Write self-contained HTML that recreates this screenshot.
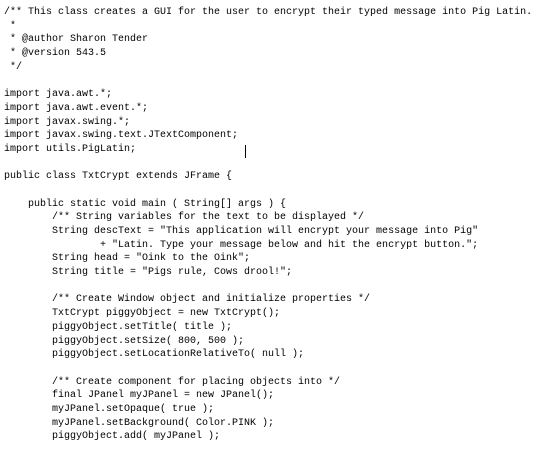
<!DOCTYPE html>
<html><head><meta charset="utf-8"><style>
html,body{margin:0;padding:0;background:#fff;width:540px;height:455px;overflow:hidden}
pre{margin:0;position:absolute;left:4px;top:6px;font-family:"Liberation Mono",monospace;font-size:10px;line-height:13.68px;color:#000;letter-spacing:0}
.cur{position:absolute;left:245px;top:145px;width:1px;height:13px;background:#000}
</style></head><body>
<pre>/** This class creates a GUI for the user to encrypt their typed message into Pig Latin.
 *
 * @author Sharon Tender
 * @version 543.5
 */

import java.awt.*;
import java.awt.event.*;
import javax.swing.*;
import javax.swing.text.JTextComponent;
import utils.PigLatin;

public class TxtCrypt extends JFrame {

    public static void main ( String[] args ) {
        /** String variables for the text to be displayed */
        String descText = "This application will encrypt your message into Pig"
                + "Latin. Type your message below and hit the encrypt button.";
        String head = "Oink to the Oink";
        String title = "Pigs rule, Cows drool!";

        /** Create Window object and initialize properties */
        TxtCrypt piggyObject = new TxtCrypt();
        piggyObject.setTitle( title );
        piggyObject.setSize( 800, 500 );
        piggyObject.setLocationRelativeTo( null );

        /** Create component for placing objects into */
        final JPanel myJPanel = new JPanel();
        myJPanel.setOpaque( true );
        myJPanel.setBackground( Color.PINK );
        piggyObject.add( myJPanel );</pre>
<div class="cur"></div>
</body></html>
